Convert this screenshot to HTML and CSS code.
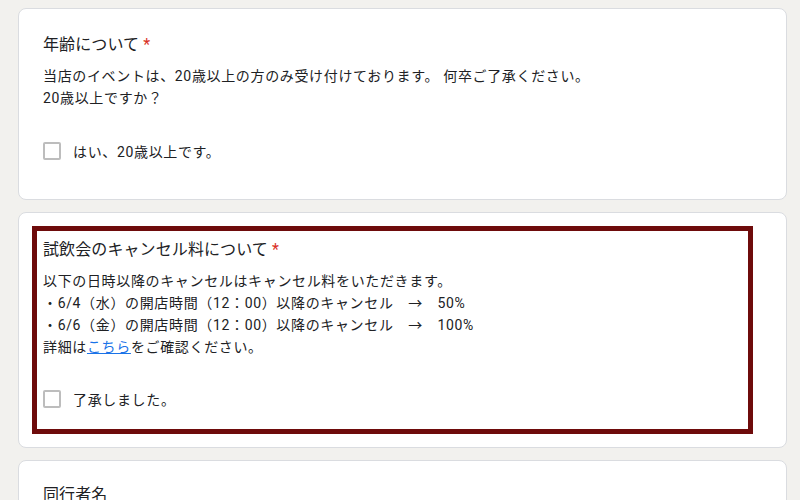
FILE: index.html
```html
<!DOCTYPE html>
<html lang="ja">
<head>
  <meta charset="UTF-8">
  <meta name="viewport" content="width=device-width, initial-scale=1.0">
  <title>試飲会 申込フォーム</title>
  <link rel="stylesheet" href="styles.css">
</head>
<body>
  <div class="form">
    <div class="card card-first">
      <div class="titulo">年齢について <span class="req">*</span></div>
      <div class="desc">
        当店のイベントは、20歳以上の方のみ受け付けております。 何卒ご了承ください。<br>
        20歳以上ですか？
      </div>
      <label class="opcion">
        <span class="check"></span>
        <span>はい、20歳以上です。</span>
      </label>
    </div>

    <div class="card card-marcada">
      <div class="marco">
        <div class="titulo">試飲会のキャンセル料について <span class="req">*</span></div>
        <div class="desc">
          以下の日時以降のキャンセルはキャンセル料をいただきます。<br>
          ・6/4（水）の開店時間（12：00）以降のキャンセル　→　50%<br>
          ・6/6（金）の開店時間（12：00）以降のキャンセル　→　100%<br>
          詳細は<a href="#">こちら</a>をご確認ください。
        </div>
        <label class="opcion">
          <span class="check"></span>
          <span>了承しました。</span>
        </label>
      </div>
    </div>

    <div class="card card-ultima">
      <div class="titulo">同行者名</div>
    </div>
  </div>
</body>
</html>
```

FILE: styles.css
```css
body {
  margin: 0;
  background: #f2f1ee;
  font-family: Roboto, "Noto Sans CJK JP", sans-serif;
  color: #202124;
}
.form {
  padding: 8px 0 0 18px;
  width: 769px;
  display: flex;
  flex-direction: column;
  gap: 12px;
}
.card {
  background: #ffffff;
  border: 1px solid #dadce0;
  border-radius: 8px;
}
.card-first {
  padding: 24px 24px 39px 24px;
}
.card-first .opcion {
  margin-top: 33px;
}
.card-marcada {
  padding: 13px 33px 13px 13px;
}
.card-ultima {
  padding: 22px 24px 40px 24px;
}
.marco {
  border: 5px solid #6e0b0b;
  padding: 7px 6px 21px 6px;
}
.marco .opcion {
  margin-top: 32px;
}
.titulo {
  font-size: 16px;
  line-height: 24px;
  letter-spacing: 0.1px;
}
.req {
  color: #d93025;
}
.desc {
  margin-top: 9px;
  font-size: 14px;
  line-height: 21.7px;
  letter-spacing: 0.65px;
}
.desc a {
  color: #1a73e8;
  text-decoration: underline;
}
.opcion {
  display: flex;
  align-items: center;
  gap: 12px;
  height: 18px;
  font-size: 14px;
  letter-spacing: 0.65px;
}
.check {
  width: 18px;
  height: 18px;
  box-sizing: border-box;
  border: 2px solid #bdbdbd;
  border-radius: 2px;
}
```
